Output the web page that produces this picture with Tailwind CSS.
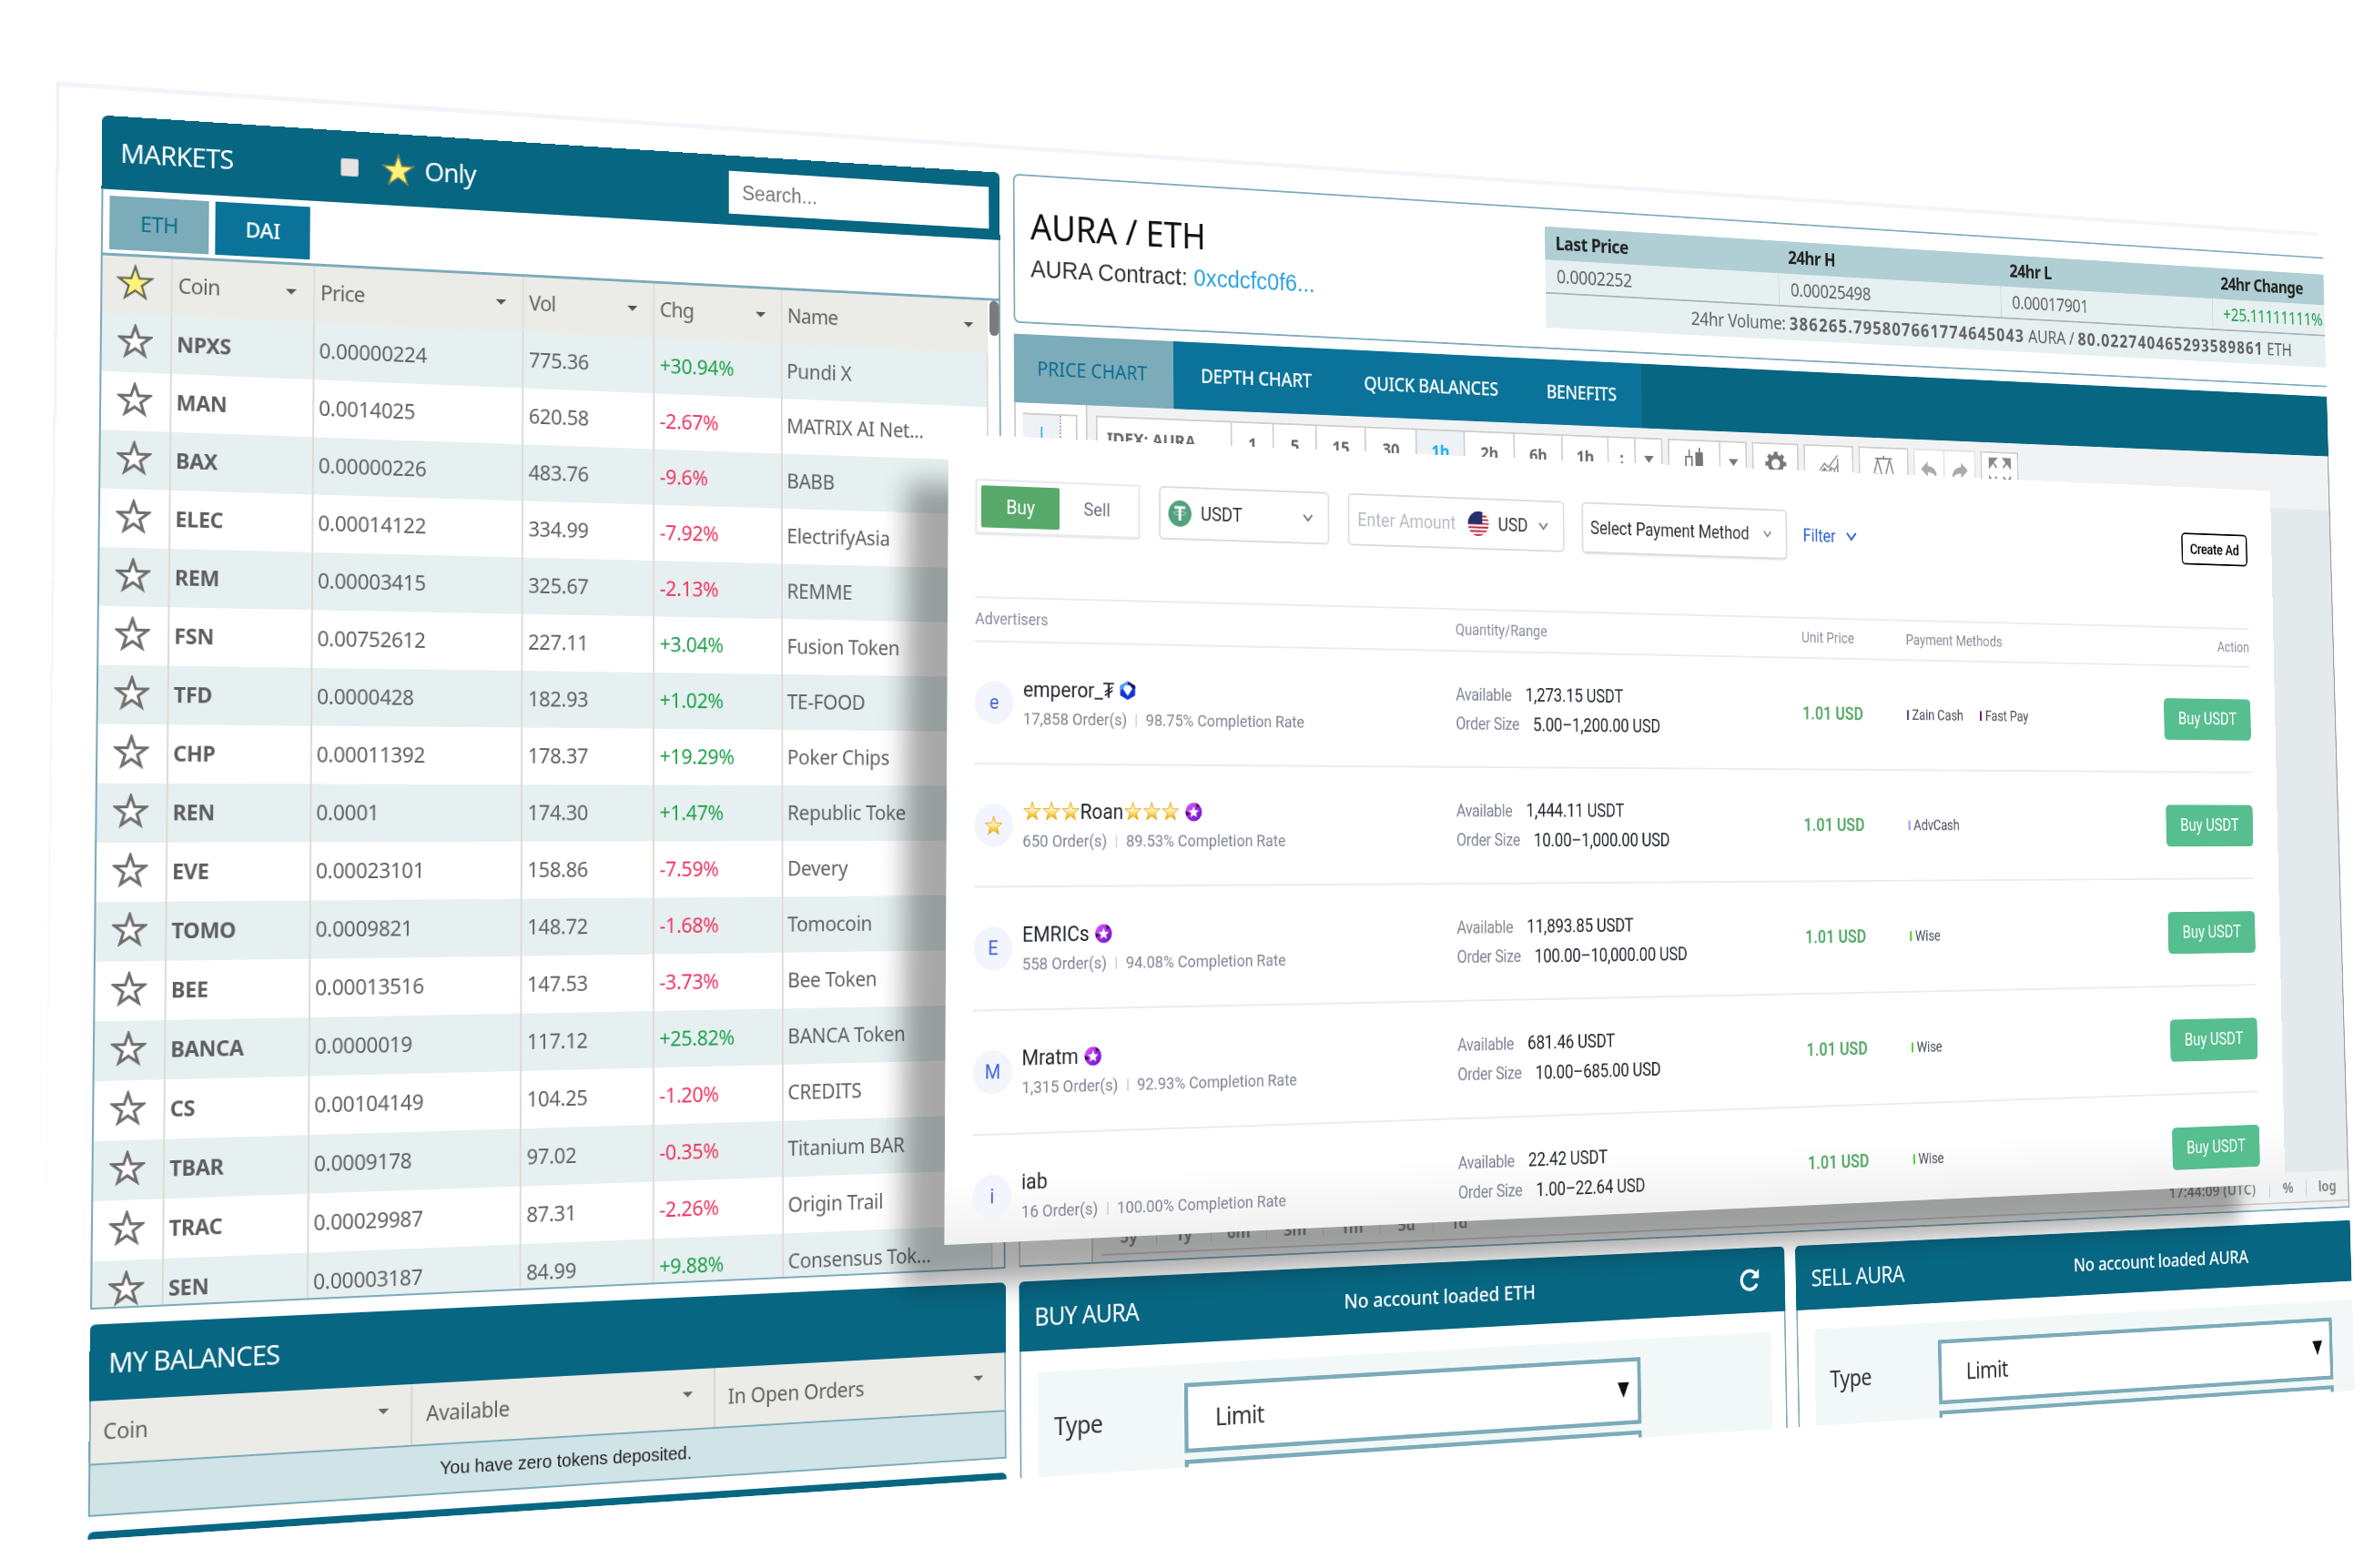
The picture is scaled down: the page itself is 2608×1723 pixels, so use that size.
<!DOCTYPE html>
<html lang="en">
<head>
<meta charset="utf-8">
<title>Exchange showcase</title>
<script src="https://cdn.jsdelivr.net/npm/@tailwindcss/browser@4"></script>
</head>
<body class="bg-white">
<svg width="0" height="0" class="absolute">
  <defs>
    <linearGradient id="gold" x1="0" y1="0" x2="0" y2="1"><stop offset="0" stop-color="#fbe08a"/><stop offset=".45" stop-color="#fff3ba"/><stop offset=".9" stop-color="#f0b000"/></linearGradient>
    <linearGradient id="violet" x1="0" y1="0" x2="1" y2="1"><stop offset="0" stop-color="#e46bf5"/><stop offset=".5" stop-color="#a42be0"/><stop offset="1" stop-color="#5b16c4"/></linearGradient>
    <symbol id="star" viewBox="0 0 24 24"><path d="M12 1.600l2.550 7.500h7.900l-6.300 4.800 2.350 7.600L12 17l-6.500 4.500 2.350-7.600-6.300-4.800h7.900z"/></symbol>
    <symbol id="caret" viewBox="0 0 14 7"><path d="M0 0h14L7 7z"/></symbol>
    <symbol id="chev" viewBox="0 0 16 12"><path d="M2 2l6 7 6-7" fill="none" stroke="currentColor" stroke-width="2.200"/></symbol>
    <symbol id="medal" viewBox="0 0 22 22"><circle cx="11" cy="11" r="10.600" fill="url(#violet)"/><path d="M.500 10a10.500 10.500 0 0 0 1.500 6l4-3zM14 1a10 10 0 0 1 5 4l-4 1z" fill="#3d0a52"/><path d="M11 4.600l1.900 4.300 4.600.4-3.500 3.100 1.100 4.600-4.100-2.400L6.900 17 8 12.400 4.500 9.300l4.600-.4z" fill="#fff"/></symbol>
  </defs>
</svg>
<main class="relative w-[2608px] h-[1723px] overflow-hidden bg-white">

  <!-- Exchange board -->
  <section class="absolute left-0 top-0 w-[3000px] h-[1535px] origin-top-left font-['Noto_Sans',sans-serif] text-[23px] leading-none tracking-[-0.3px] text-[#626262] [transform:matrix3d(1.029133,0.075917,0,0.0000846,-0.011847,0.993389,0,-0.0000156,0,0,1,0,112.3,126.7,0,1)]">
    <div class="absolute -left-[49px] -top-[34px] w-[3040px] h-[5px] bg-[#f4f4fb]"></div>
    <div class="absolute -left-[49px] -top-[34px] w-[3px] h-[1300px] bg-linear-to-b from-[#f0f1fa] to-white"></div>
    <div class="flex gap-[17px] w-[3000px] h-[1535px] overflow-hidden">

      <div class="w-[1053px] shrink-0 flex flex-col gap-[16px]">
        <div class="h-[1292.400px] shrink-0 flex flex-col overflow-hidden rounded-t-[6px]">
          <div class="h-[81px] shrink-0 bg-[#076682] flex items-center text-white text-[29px] tracking-[-0.8px]">
            <span class="w-[243px] pl-[20px] pb-[3px]">MARKETS</span>
            <span class="ml-[20px] w-[20px] h-[20px] bg-[#e6e3e1] border border-[#cfcfcf] rounded-[2px]"></span>
            <svg class="ml-[25px] w-[40px] h-[40px]" fill="#fdf27c" stroke="#7d8350" stroke-width="1"><use href="#star"/></svg>
            <span class="ml-[10px] pb-[2px] tracking-[-1px]">Only</span>
            <span class="ml-auto mr-[14px] mt-[5px] w-[323px] h-[50px] bg-white pl-[16px] flex items-center font-['Liberation_Sans',sans-serif] text-[23px] tracking-normal text-[#757575]">Search...</span>
          </div>
          <div class="h-[70px] shrink-0 border-x-2 border-[#7cabb9] flex gap-[7px] pl-[7px] pt-[7px]">
            <span class="w-[108px] h-[59px] bg-[#7cabb9] text-[#0b6f92] flex items-center justify-center">ETH</span>
            <span class="w-[105px] h-[59px] bg-[#0b7399] text-white font-medium flex items-center justify-center">DAI</span>
          </div>
          <div class="grow border-2 border-t-[3px] border-[#7cabb9] flex relative">
            <div id="markets" class="w-[1035px] h-[1136px] overflow-hidden"></div>
            <span class="absolute right-0 top-0 w-[12px] h-[42px] rounded-full bg-[#7b7b7b]"></span>
          </div>
        </div>
        <div class="h-[203px] shrink-0 flex flex-col">
          <div class="h-[81px] bg-[#076682] rounded-t-[6px] flex items-center pl-[20px] text-white text-[29px] tracking-[-0.9px]">MY BALANCES</div>
          <div class="h-[66px] bg-[#ebebe7] border-x-2 border-[#7cabb9] flex items-center">
            <span class="w-[349px] h-full border-r-2 border-[#d6d6d4] flex items-center justify-between pl-[13px] pr-[24px]">Coin<svg class="w-[13px] h-[6px] mb-[10px]" fill="#666"><use href="#caret"/></svg></span>
            <span class="w-[348px] h-full border-r-2 border-[#d6d6d4] flex items-center justify-between pl-[15px] pr-[24px]">Available<svg class="w-[13px] h-[6px] mb-[10px]" fill="#666"><use href="#caret"/></svg></span>
            <span class="grow h-full flex items-center justify-between pl-[15px] pr-[26px]">In Open Orders<svg class="w-[13px] h-[6px] mb-[10px]" fill="#666"><use href="#caret"/></svg></span>
          </div>
          <div class="h-[57px] bg-[#d0e3e7] border-2 border-[#7cabb9] flex items-center justify-center font-['Liberation_Sans',sans-serif] text-[20px] tracking-normal text-[#222] pb-[2px]">You have zero tokens deposited.</div>
        </div>
        <div class="h-[20px] shrink-0 bg-[#076682] rounded-t-[6px]"></div>
      </div>

      <div class="w-[1930px] shrink-0 flex flex-col">
        <div class="h-[179px] shrink-0 w-[1990px] border-2 border-[#7cabb9] rounded-[8px] flex pl-[20px]">
          <div class="w-[697px] shrink-0 pt-[38px]">
            <div class="text-[43px] leading-[44px] tracking-[-0.2px] text-[#111]">AURA / ETH</div>
            <div class="mt-[12px] font-['Liberation_Sans',sans-serif] text-[29px] leading-[34px] tracking-normal text-[#333]">AURA Contract: <span class="text-[#2aa1dc]">0xcdcfc0f6...</span></div>
          </div>
          <div class="mt-[22px] w-[1364px] shrink-0 h-[128px] bg-[#e6f0f0] text-[23px] tracking-[-0.3px]">
            <div class="h-[42px] pb-[2px] grid grid-cols-4 items-center bg-[#b0cfd5] font-bold tracking-[-0.6px] text-[#222]"><span class="pl-[15px]">Last Price</span><span class="pl-[15px]">24hr H</span><span class="pl-[15px]">24hr L</span><span class="pl-[15px]">24hr Change</span></div>
            <div class="h-[43px] grid grid-cols-4 border-b-2 border-[#a9b3b3]"><span class="pl-[16px] flex items-center">0.0002252</span><span class="pl-[17px] flex items-center border-l border-[#c3d5d8]">0.00025498</span><span class="pl-[17px] flex items-center border-l border-[#c3d5d8]">0.00017901</span><span class="pl-[17px] flex items-center border-l border-[#c3d5d8] text-[#1fa04b]">+25.11111111%</span></div>
            <div class="h-[43px] flex items-center justify-center whitespace-pre">24hr Volume: <b class="tracking-[1.600px]">386265.795807661774645043</b> AURA / <b class="tracking-[1.600px]">80.022740465293589861</b> ETH</div>
          </div>
        </div>
        <div class="mt-[13px] h-[82px] shrink-0 bg-[#076682] flex items-center text-white tracking-[-0.5px] font-medium">
          <span class="w-[207px] h-full bg-[#7cabb9] text-[#0b6f92] font-normal tracking-[0px] pr-[5px] pb-[2px] flex items-center justify-center">PRICE CHART</span>
          <span class="w-[648px] h-full bg-[#0b7399] pb-[2px] flex items-center"><span class="pl-[36px] w-[256px]">DEPTH CHART</span><span class="w-[255px]">QUICK BALANCES</span><span>BENEFITS</span></span>
        </div>
        <div class="h-[1017px] shrink-0 border-b-2 border-[#7cabb9] flex">
          <div class="w-[94px] border-x-2 border-[#cfcdc8] pt-[12px] pl-[9px] shrink-0">
            <div class="w-[70px] h-[52px] border-t-2 border-r-2 border-[#cfcdc8] flex">
              <div class="w-[49px] h-full bg-[#eef1f5] border-r-2 border-dotted border-[#aaa] flex justify-center"><svg class="w-[30px] h-[44px]" viewBox="0 0 30 44" stroke="#35b5e8" stroke-width="2"><path d="M15 14v30M1 29h28"/></svg></div>
            </div>
          </div>
          <div class="grow bg-[#e4e9ec] border-r-2 border-[#9aa0a4] flex flex-col justify-between">
            <div class="h-[74px] bg-[#f1f2f4] pt-[12px] pl-[11px] flex gap-[8px] font-bold text-[21px] text-[#6a6a6a]">
              <div class="h-[54px] bg-white border-2 border-[#d0cec9] flex divide-x-2 divide-[#d0cec9]">
                <span class="w-[177px] flex items-center pl-[12px]">IDEX: AURA</span>
                <span class="w-[56px] flex items-center justify-center">1</span><span class="w-[58px] flex items-center justify-center">5</span><span class="w-[67px] flex items-center justify-center">15</span><span class="w-[70px] flex items-center justify-center">30</span><span class="w-[67px] flex items-center justify-center bg-[#eef1f5] text-[#1fb0ec]">1h</span><span class="w-[70px] flex items-center justify-center">2h</span><span class="w-[68px] flex items-center justify-center">6h</span><span class="w-[66px] flex items-center justify-center">1h</span><span class="w-[39px] flex items-center justify-center">:</span><span class="w-[37px] flex items-center justify-center"><svg class="w-[14px] h-[9px]" viewBox="0 0 14 7" preserveAspectRatio="none" fill="#777"><path d="M0 0h14L7 7z"/></svg></span>
              </div>
              <div class="h-[54px] bg-white border-2 border-[#d0cec9] flex divide-x-2 divide-[#d0cec9]">
                <span class="w-[75px] flex items-center justify-center"><svg class="w-[34px] h-[40px]" viewBox="0 0 34 40"><path d="M9 6v8M4 36V15h9v21M24 3v6" stroke="#777" stroke-width="2" fill="none"/><path d="M18 9h11v27H18z" fill="#777"/></svg></span>
                <span class="w-[37px] flex items-center justify-center"><svg class="w-[14px] h-[9px]" viewBox="0 0 14 7" preserveAspectRatio="none" fill="#777"><path d="M0 0h14L7 7z"/></svg></span>
              </div>
              <div class="h-[54px] w-[69px] bg-white border-2 border-[#d0cec9] flex items-center justify-center"><svg class="w-[34px] h-[34px]" viewBox="0 0 24 24"><circle cx="12" cy="12" r="6.500" fill="none" stroke="#777" stroke-width="4"/><path d="M12 1v4M12 19v4M1 12h4M19 12h4M4.200 4.200l3 3M16.800 16.800l3 3M4.200 19.800l3-3M16.800 7.200l3-3" stroke="#777" stroke-width="4"/></svg></div>
              <div class="h-[54px] w-[75px] bg-white border-2 border-[#d0cec9] flex items-center justify-center"><svg class="w-[32px] h-[36px]" viewBox="0 0 32 36" fill="none" stroke="#888" stroke-width="1.800"><path d="M2 24l7-9 6 5 6-7 8-9M2 30l7-9 5 6 5-7 5 3 6-8M4 36V28M9 36V22M14 36V28M19 36V22M24 36V24M29 36V8"/></svg></div>
              <div class="h-[54px] w-[76px] bg-white border-2 border-[#d0cec9] flex items-center justify-center"><svg class="w-[36px] h-[36px]" viewBox="0 0 36 36" fill="none" stroke="#888" stroke-width="2"><path d="M5 6h26M18 2v4M9 7L3 27h12zM27 7l-6 20h12zM3 30h12M21 30h12"/></svg></div>
              <div class="h-[54px] bg-white border-2 border-[#e3e2df] flex divide-x-2 divide-[#e3e2df]">
                <span class="w-[46px] flex items-center justify-center"><svg class="w-[28px] h-[28px]" viewBox="0 0 24 24" fill="#aaa"><path d="M10 3v5c8 0 12 5 12 14-3-5-6-7-12-7v5L1 11.500z"/></svg></span>
                <span class="w-[46px] flex items-center justify-center"><svg class="w-[28px] h-[28px]" viewBox="0 0 24 24" fill="#aaa"><path d="M14 3v5C6 8 2 13 2 22c3-5 6-7 12-7v5l9-8.500z"/></svg></span>
              </div>
              <div class="h-[54px] w-[59px] bg-white border-2 border-[#d0cec9] flex items-center justify-center"><svg class="w-[36px] h-[40px]" viewBox="0 0 36 40" fill="#888" stroke="#888" stroke-width="3"><path d="M2 2h10L2 13zM34 2H24l10 11zM2 38h10L2 27zM34 38H24l10-11zM5 5l8 9M31 5l-8 9M5 35l8-9M31 35l-8-9" stroke-width="2.500"/></svg></div>
            </div>
            <div class="h-[48px] bg-[#eff1f2] pl-[11px] text-[20px] font-bold text-[#8c8c8c]">
              <div class="h-[41px] border-b-2 border-[#cfccc8] flex items-center">
                <span class="w-[70px] text-center">5y</span><span class="w-[71px] text-center border-l border-[#ccc]">1y</span><span class="w-[73px] text-center border-l border-[#ccc]">6m</span><span class="w-[76px] text-center border-l border-[#ccc]">3m</span><span class="w-[76px] text-center border-l border-[#ccc]">1m</span><span class="w-[72px] text-center border-l border-[#ccc]">5d</span><span class="w-[72px] text-center border-l border-[#ccc]">1d</span>
                <span class="ml-auto w-[163px] whitespace-nowrap font-semibold tracking-[0.300px]">17:44:09 (UTC)</span><span class="w-[61px] h-[26px] pt-[3px] text-center border-x border-[#ccc]">%</span><span class="w-[69px] text-center">log</span>
              </div>
            </div>
          </div>
        </div>
        <div class="mt-[17px] flex gap-[16px] shrink-0">
          <div class="w-[1042px] shrink-0">
            <div class="h-[81px] bg-[#076682] rounded-t-[6px] text-white flex items-center pl-[19px] pr-[36px]">
              <span class="w-[403px] text-[29px] tracking-[-0.9px]">BUY AURA</span><span class="tracking-[-0.2px] text-[24px] font-medium">No account loaded ETH</span>
              <svg class="ml-auto w-[31px] h-[31px]" viewBox="0 0 24 24" fill="none" stroke="#fff" stroke-width="3.200"><path d="M20 15.500A9 9 0 1 1 18.500 5.600"/><path d="M22.500 1v9h-9z" fill="#fff" stroke="none"/></svg>
            </div>
            <div class="h-[146px] border-x-2 border-[#7cabb9] pt-[25px] pl-[21px] pr-[20px]">
              <div class="h-full bg-[#f2f8f8] rounded-[4px] pt-[22px] pl-[20px] flex text-[29px] tracking-[-0.7px] text-[#333]">
                <span class="w-[167px] pt-[26px]">Type</span>
                <div class="flex flex-col gap-[8px]"><div class="w-[621px] h-[82px] shrink-0 border-[5px] border-[#7cabb9] bg-white flex items-center justify-between pl-[35px] pr-[12px]"><span class="pb-[2px]">Limit</span><svg class="w-[16px] h-[19px] mb-[4px]" viewBox="0 0 14 7" preserveAspectRatio="none" fill="#111"><path d="M0 0h14L7 7z"/></svg></div><div class="w-[621px] h-[82px] shrink-0 border-[5px] border-[#7cabb9] bg-white"></div></div>
              </div>
            </div>
          </div>
          <div class="w-[1042px] shrink-0">
            <div class="h-[81px] bg-[#076682] rounded-t-[6px] text-white flex items-center pl-[23px]">
              <span class="w-[400px] text-[29px] tracking-[-0.8px]">SELL AURA</span><span class="tracking-[-0.3px] text-[24px] font-medium">No account loaded AURA</span>
            </div>
            <div class="h-[146px] border-x-2 border-[#7cabb9] pt-[25px] pl-[24px]">
              <div class="h-full bg-[#f2f8f8] rounded-[4px] pt-[22px] pl-[22px] flex text-[29px] tracking-[-0.7px] text-[#333]">
                <span class="w-[163px] pt-[26px]">Type</span>
                <div class="flex flex-col gap-[8px]"><div class="w-[626px] h-[82px] shrink-0 border-[5px] border-[#7cabb9] bg-white flex items-center justify-between pl-[37px] pr-[12px]"><span class="pb-[2px]">Limit</span><svg class="w-[16px] h-[19px] mb-[4px]" viewBox="0 0 14 7" preserveAspectRatio="none" fill="#111"><path d="M0 0h14L7 7z"/></svg></div><div class="w-[626px] h-[82px] shrink-0 border-[5px] border-[#7cabb9] bg-white"></div></div>
              </div>
            </div>
          </div>
        </div>
      </div>
    </div>
  </section>

  <!-- Peer-to-peer offers card -->
  <section class="absolute left-0 top-0 w-[1907px] h-[892px] origin-top-left font-['Roboto',sans-serif] leading-none text-[#23262f] [transform:matrix3d(0.984116,0.080759,0,0.000088963,-0.023934,0.975607,0,-0.000018088,0,0,1,0,1071.3,703.7,0,1)_translate(-34.2px,-229.3px)]">
    <div class="absolute -left-[50px] top-[56px] w-[1880px] h-[880px] bg-black/34 blur-[15px]"></div>
    <div class="relative h-[892px] overflow-hidden px-[34px] bg-linear-to-b from-white from-92% to-[#f1f1f1]">
      <div class="h-[180px] pt-[49px] flex items-start text-[22px] text-[#333]">
        <div class="w-[207px] h-[61px] border-2 border-[#e9eaf2] p-[5px] flex shadow-sm"><span class="w-[98px] h-[47px] bg-[#58aa6a] text-white rounded-[2px] flex items-center justify-center">Buy</span><span class="grow flex items-center justify-center text-[21px] text-[#6b6f80]">Sell</span></div>
        <div class="ml-[25px] w-[224px] h-[61px] border-2 border-[#dcdcdc] rounded-[6px] flex items-center pl-[10px] pr-[19px]"><svg class="w-[30px] h-[30px] mr-[12px]" viewBox="0 0 30 30"><circle cx="15" cy="15" r="15" fill="#53a17f"/><path d="M8 8h14M15 8v15" stroke="#fff" stroke-width="3.200"/><ellipse cx="15" cy="14.500" rx="8" ry="2.200" fill="none" stroke="#fff" stroke-width="1" stroke-opacity=".6"/></svg>USDT<svg class="ml-auto w-[15px] h-[12px] text-[#777]"><use href="#chev"/></svg></div>
        <div class="ml-[25px] w-[299px] h-[61px] border-2 border-[#dcdcdc] rounded-[6px] flex items-center pl-[11px] pr-[20px]"><span class="w-[151px] text-[#b9bbc4]">Enter Amount</span><svg class="w-[29px] h-[29px] mr-[13px]" viewBox="0 0 29 29"><clipPath id="fl"><circle cx="14.500" cy="14.500" r="14.500"/></clipPath><g clip-path="url(#fl)"><path fill="#fff" d="M0 0h29v29H0z"/><path stroke="#bf2f45" stroke-width="2.200" d="M0 1.100h29M0 5.600h29M0 10h29M0 14.500h29M0 18.900h29M0 23.400h29M0 27.900h29"/><path fill="#27306b" d="M0 0h20v15H0z"/></g></svg><span>USD</span><svg class="ml-auto w-[15px] h-[12px] text-[#777]"><use href="#chev"/></svg></div>
        <div class="ml-[25px] w-[299px] h-[61px] border-2 border-[#dcdcdc] rounded-[6px] flex items-center pl-[10px] pr-[20px] shadow-sm"><span class="tracking-[-0.1px]">Select Payment Method</span><svg class="ml-auto w-[14px] h-[12px] text-[#888]"><use href="#chev"/></svg></div>
        <div class="ml-[24px] h-[61px] flex items-center text-[#2f5fd8]">Filter<svg class="ml-[15px] w-[18px] h-[15px]"><use href="#chev"/></svg></div>
        <div class="ml-auto mr-[7px] mt-[10px] w-[109px] h-[41px] border-[2.500px] border-black rounded-[6px] flex items-center justify-center text-[19px] font-medium tracking-[-0.3px] text-black">Create Ad</div>
      </div>
      <div class="w-[1832px] h-[51px] border-y-2 border-[#ebebf2] grid grid-cols-[627px_497px_158px_1fr_100px] items-center text-[18.500px] text-[#888c9b] pb-[1px]"><span class="text-[18px]">Advertisers</span><span>Quantity/Range</span><span>Unit Price</span><span>Payment Methods</span><span class="text-right">Action</span></div>
      <div id="offers"></div>
    </div>
  </section>
</main>
<script>
const coins = [["NPXS","0.00000224","775.36","+30.94%","Pundi X"],["MAN","0.0014025","620.58","-2.67%","MATRIX AI Net..."],["BAX","0.00000226","483.76","-9.6%","BABB"],["ELEC","0.00014122","334.99","-7.92%","ElectrifyAsia"],["REM","0.00003415","325.67","-2.13%","REMME"],["FSN","0.00752612","227.11","+3.04%","Fusion Token"],["TFD","0.0000428","182.93","+1.02%","TE-FOOD"],["CHP","0.00011392","178.37","+19.29%","Poker Chips"],["REN","0.0001","174.30","+1.47%","Republic Toke"],["EVE","0.00023101","158.86","-7.59%","Devery"],["TOMO","0.0009821","148.72","-1.68%","Tomocoin"],["BEE","0.00013516","147.53","-3.73%","Bee Token"],["BANCA","0.0000019","117.12","+25.82%","BANCA Token"],["CS","0.00104149","104.25","-1.20%","CREDITS"],["TBAR","0.0009178","97.02","-0.35%","Titanium BAR"],["TRAC","0.00029987","87.31","-2.26%","Origin Trail"],["SEN","0.00003187","84.99","+9.88%","Consensus Tok..."]];
const headCell = t => `<span class="h-full border-l-2 border-[#dfdfe0] pl-[6px] pr-[18px] pb-[4px] flex items-center justify-between tracking-[-0.7px]">${t}<svg class="w-[13px] h-[6px]" fill="#555"><use href="#caret"/></svg></span>`;
document.getElementById('markets').innerHTML =
  `<div class="h-[63px] grid grid-cols-[74px_157px_238px_154px_154px_1fr] items-center bg-[#ebebe7]"><svg class="ml-[15px] w-[41px] h-[41px] mb-[6px]" fill="#fdf27c" stroke="#66665a" stroke-width="1.300"><use href="#star"/></svg>${["Coin","Price","Vol","Chg","Name"].map(headCell).join('')}</div>` +
  coins.map((c, i) => `<div class="h-[64px] grid grid-cols-[74px_157px_238px_154px_154px_1fr] items-center ${i % 2 ? 'bg-white' : 'bg-[#e6f0f0]'}"><svg class="ml-[17px] w-[38px] h-[38px] mb-[4px]" fill="#fff" stroke="#6f6f6f" stroke-width="1.900"><use href="#star"/></svg><span class="h-full border-l-2 border-[#dedbd6] pl-[5px] pb-[2px] flex items-center font-bold text-[#5e5e5e]">${c[0]}</span><span class="h-full border-l-2 border-[#dedbd6] pl-[5px] pb-[2px] flex items-center">${c[1]}</span><span class="h-full border-l-2 border-[#dedbd6] pl-[6px] pb-[2px] flex items-center">${c[2]}</span><span class="h-full border-l-2 border-[#dedbd6] pl-[6px] pb-[2px] flex items-center ${c[3][0] === '+' ? 'text-[#1fa04b]' : 'text-[#ef3360]'}">${c[3]}</span><span class="h-full border-x-2 border-[#dedbd6] pl-[5px] pb-[2px] flex items-center">${c[4]}</span></div>`).join('');

const g = '<svg class="w-[24px] h-[25px]" fill="url(#gold)" stroke="#e3a514" stroke-width="0.900"><use href="#star"/></svg>';
const medal = '<svg class="ml-[7px] w-[22px] h-[22px]"><use href="#medal"/></svg>';
const hexa = '<svg class="ml-[6px] w-[22px] h-[23px]" viewBox="0 0 22 22"><path d="M11 .5l9.500 5v11l-9.500 5-9.500-5v-11z" fill="#1534d0"/><path d="M11 .5l9.500 5v4L14 5z" fill="#140a5c"/><path d="M11 .5l-9.500 5v6L6 8l5-3z" fill="#4f9bf5"/><path d="M8 5h6l3 4-6 8-6-8z" fill="#fff"/></svg>';
const offers = [
  ["e","emperor_₮"+hexa,"17,858","98.75%","1,273.15","5.00–1,200.00",[["#5b4a9c","Zain Cash"],["#7a1f6d","Fast Pay"]]],
  [g,g+g+g+"Roan"+g+g+g+medal,"650","89.53%","1,444.11","10.00–1,000.00",[["#a9a2f5","AdvCash"]]],
  ["E","EMRICs"+medal,"558","94.08%","11,893.85","100.00–10,000.00",[["#5ed13a","Wise"]]],
  ["M","Mratm"+medal,"1,315","92.93%","681.46","10.00–685.00",[["#5ed13a","Wise"]]],
  ["i","iab","16","100.00%","22.42","1.00–22.64",[["#5ed13a","Wise"]]]];
document.getElementById('offers').innerHTML = offers.map(o => `
<div class="w-[1832px] h-[136px] border-b-2 border-[#ebebf2] grid grid-cols-[627px_497px_158px_1fr_143px] items-center">
  <div class="flex items-center"><span class="w-[48px] h-[48px] rounded-full bg-[#f2f5fd] text-[#3f63d2] text-[22px] flex items-center justify-center">${o[0]}</span>
    <div class="ml-[12px] flex flex-col gap-[9px]"><div class="h-[26px] flex items-center text-[24px]">${o[1]}</div><div class="h-[22px] flex items-center text-[19px] text-[#7f8393]">${o[2]} Order(s)<span class="mx-[11px] w-[2px] h-[14px] bg-[#d5d7df]"></span>${o[3]} Completion Rate</div></div></div>
  <div class="flex flex-col gap-[13px] text-[21.500px] tracking-[-0.2px]"><div class="flex items-center"><span class="mr-[19px] text-[20px] tracking-[-0.3px] text-[#7f8393]">Available</span>${o[4]} USDT</div><div class="flex items-center"><span class="mr-[19px] text-[20px] tracking-[-0.3px] text-[#7f8393]">Order Size</span>${o[5]} USD</div></div>
  <div class="text-[22px] font-semibold text-[#57a866]">1.01 USD</div>
  <div class="flex gap-[26px] text-[18px] tracking-[-0.1px] text-[#4a4e5c]">${o[6].map(m => `<span class="flex items-center"><i class="mr-[5px] w-[3px] h-[12px]" style="background:${m[0]}"></i>${m[1]}</span>`).join('')}</div>
  <div class="h-[53px] rounded-[6px] bg-[#57be90] text-white text-[22px] flex items-center justify-center">Buy USDT</div>
</div>`).join('');
</script>
</body>
</html>
